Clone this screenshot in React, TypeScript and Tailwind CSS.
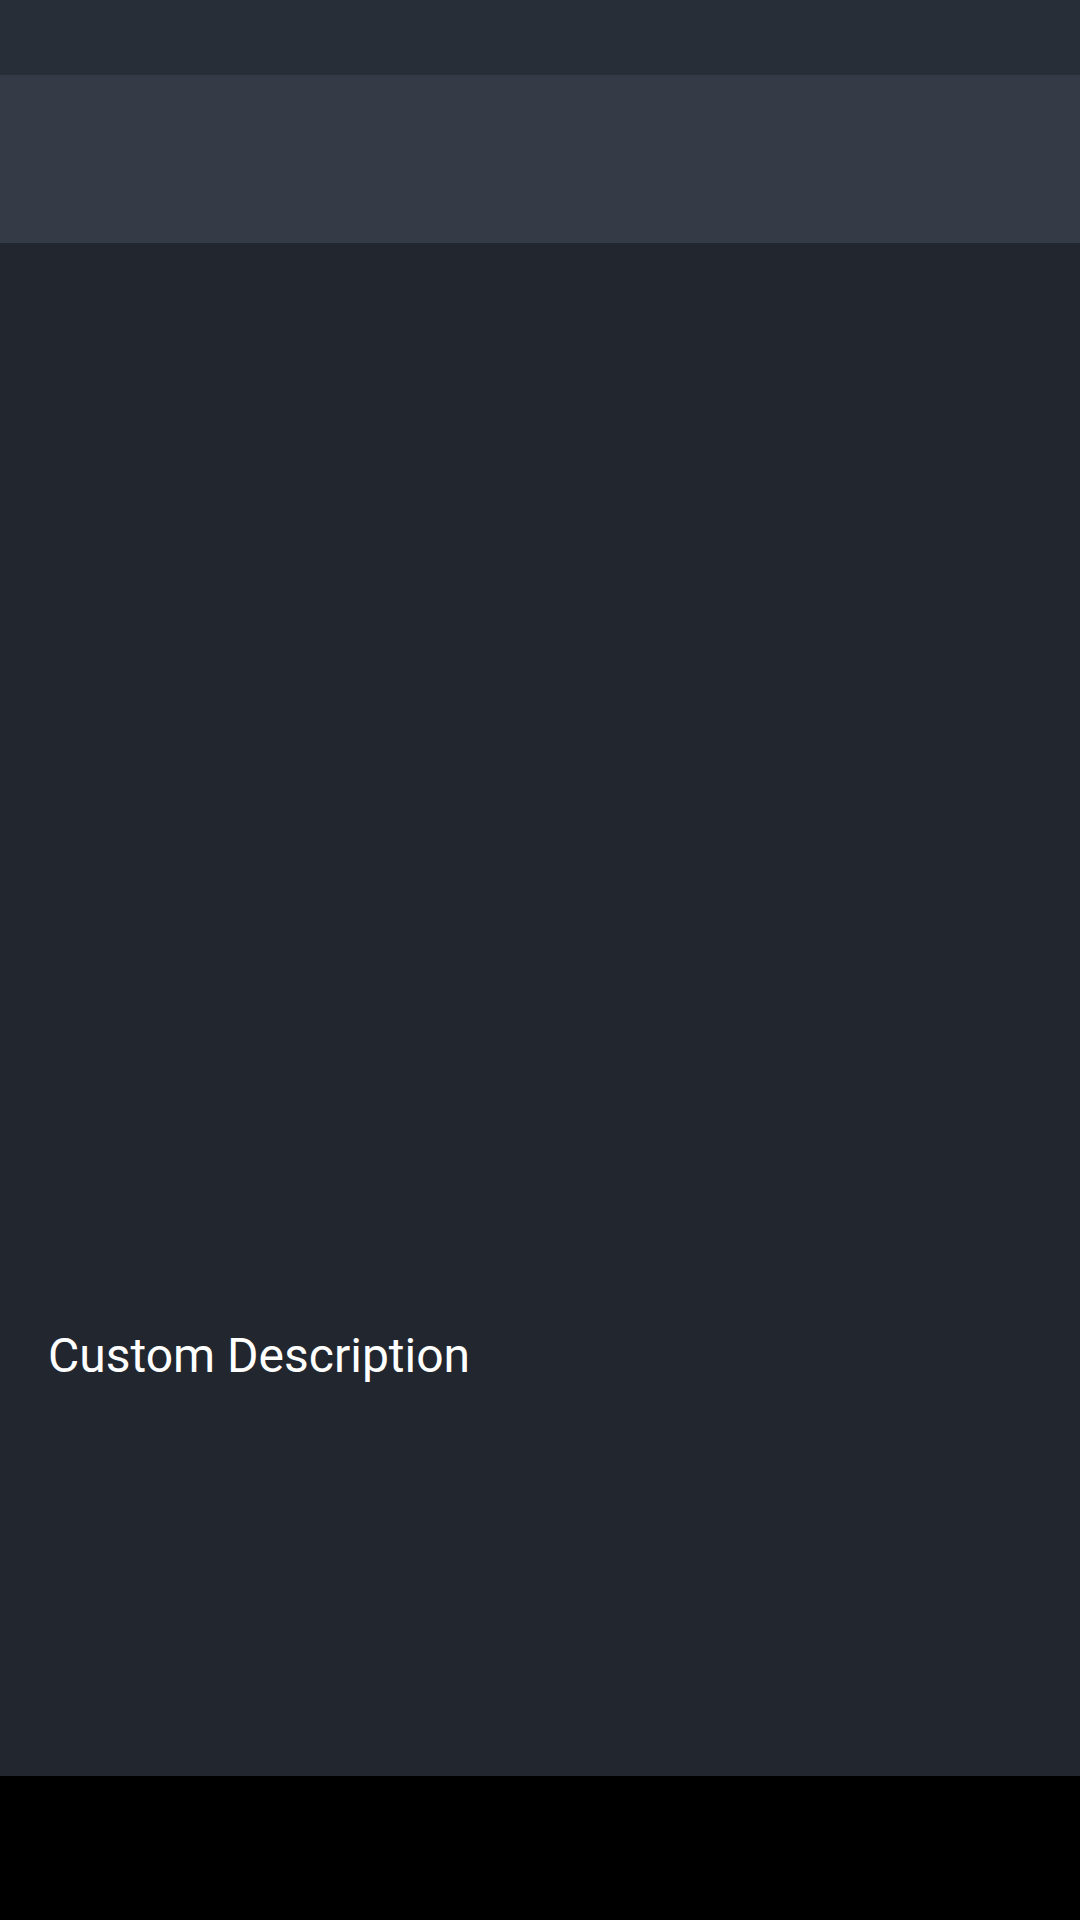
export default function App() {
  return (
    <div className="w-[1080px] h-[1920px] flex flex-col bg-black" style={{ fontFamily: "Roboto, sans-serif" }}>
      <div className="h-[75px] bg-[#282e38]" />
      <div className="h-[168px] bg-[#353a47]" />
      <div className="h-[1533px] bg-[#22272f] flex flex-col">
        <div className="h-[1085px]" />
        <div className="pl-[48px] text-[48px] leading-[56px] text-white">Custom Description</div>
      </div>
      <div className="flex-1 bg-black" />
    </div>
  );
}
